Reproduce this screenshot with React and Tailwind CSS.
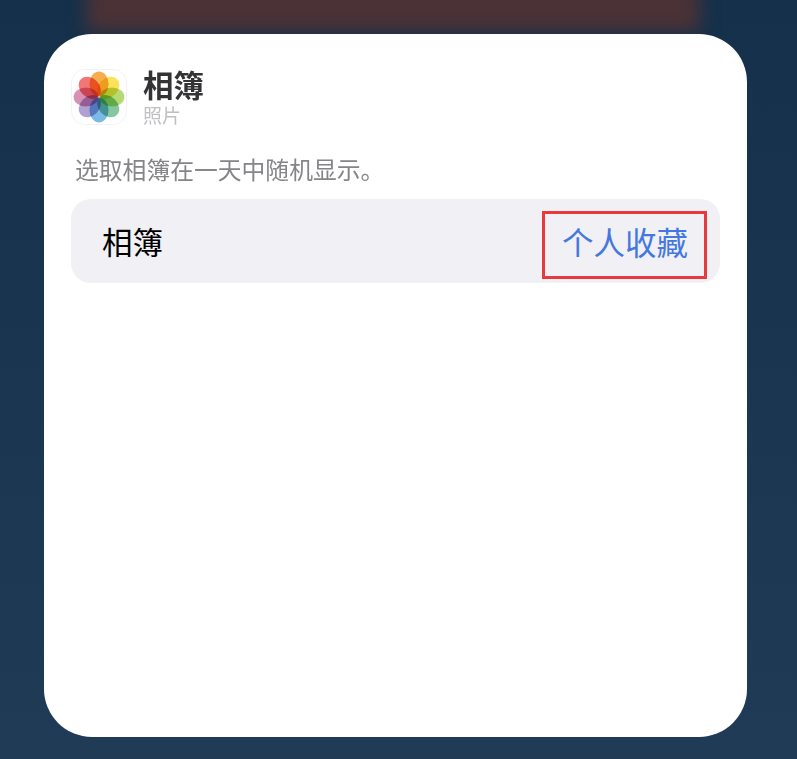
const CJK = { fontFamily: '"Noto Sans CJK SC", "Noto Sans", sans-serif' };

const PETALS = [
  ["#f4a83c", 0],
  ["#fae04c", 45],
  ["#b0d668", 90],
  ["#7cc29a", 135],
  ["#70b4e2", 180],
  ["#a89ad0", 225],
  ["#d488ae", 270],
  ["#f06a68", 315],
];

function PhotosIcon() {
  return (
    <svg width="56" height="56" viewBox="0 0 56 56" className="shrink-0">
      <rect x="0.5" y="0.5" width="55" height="55" rx="13" fill="#fff" stroke="#f2f2f4" />
      <g style={{ isolation: "isolate" }}>
        {PETALS.map(([c, a]) => (
          <ellipse
            key={a}
            cx="28"
            cy="15"
            rx="9.6"
            ry="12.4"
            fill={c}
            opacity="0.92"
            transform={`rotate(${a} 28 28)`}
            style={{ mixBlendMode: "multiply" }}
          />
        ))}
      </g>
    </svg>
  );
}

export default function App() {
  return (
    <div
      className="relative h-[759px] w-[797px] overflow-hidden bg-gradient-to-b from-[#14304a] to-[#1f3b56] pt-[34px] pl-[44px]"
      style={CJK}
    >
      <div className="absolute left-[86px] top-[-30px] h-[62px] w-[614px] bg-[#4b3236] blur-[9px]" />
      <div className="relative h-[703px] w-[703px] rounded-[48px] bg-white pl-[27px] pr-[27px] pt-[35px]">
        <div className="flex items-start gap-[16px]">
          <PhotosIcon />
          <div className="flex flex-col">
            <span className="mt-[-3px] text-[30.5px] font-bold leading-[36px] text-[#333336]">相簿</span>
            <span className="mt-[1px] text-[19px] leading-[24px] text-[#c0c0c4]">照片</span>
          </div>
        </div>
        <p className="mt-[25px] pl-[4px] text-[23.8px] leading-[34px] text-[#858589]">选取相簿在一天中随机显示。</p>
        <div className="relative mt-[13px] flex h-[84px] w-[649px] items-center justify-between rounded-[20px] bg-[#f0f0f5] pl-[31px] pr-[32px]">
          <span className="text-[30.5px] leading-[40px] text-black">相簿</span>
          <span className="text-[31.5px] leading-[40px] text-[#4478e0]">个人收藏</span>
          <div className="absolute left-[471px] top-[12px] h-[68px] w-[165px] border-[3px] border-[#e63a3e]" />
        </div>
      </div>
    </div>
  );
}
